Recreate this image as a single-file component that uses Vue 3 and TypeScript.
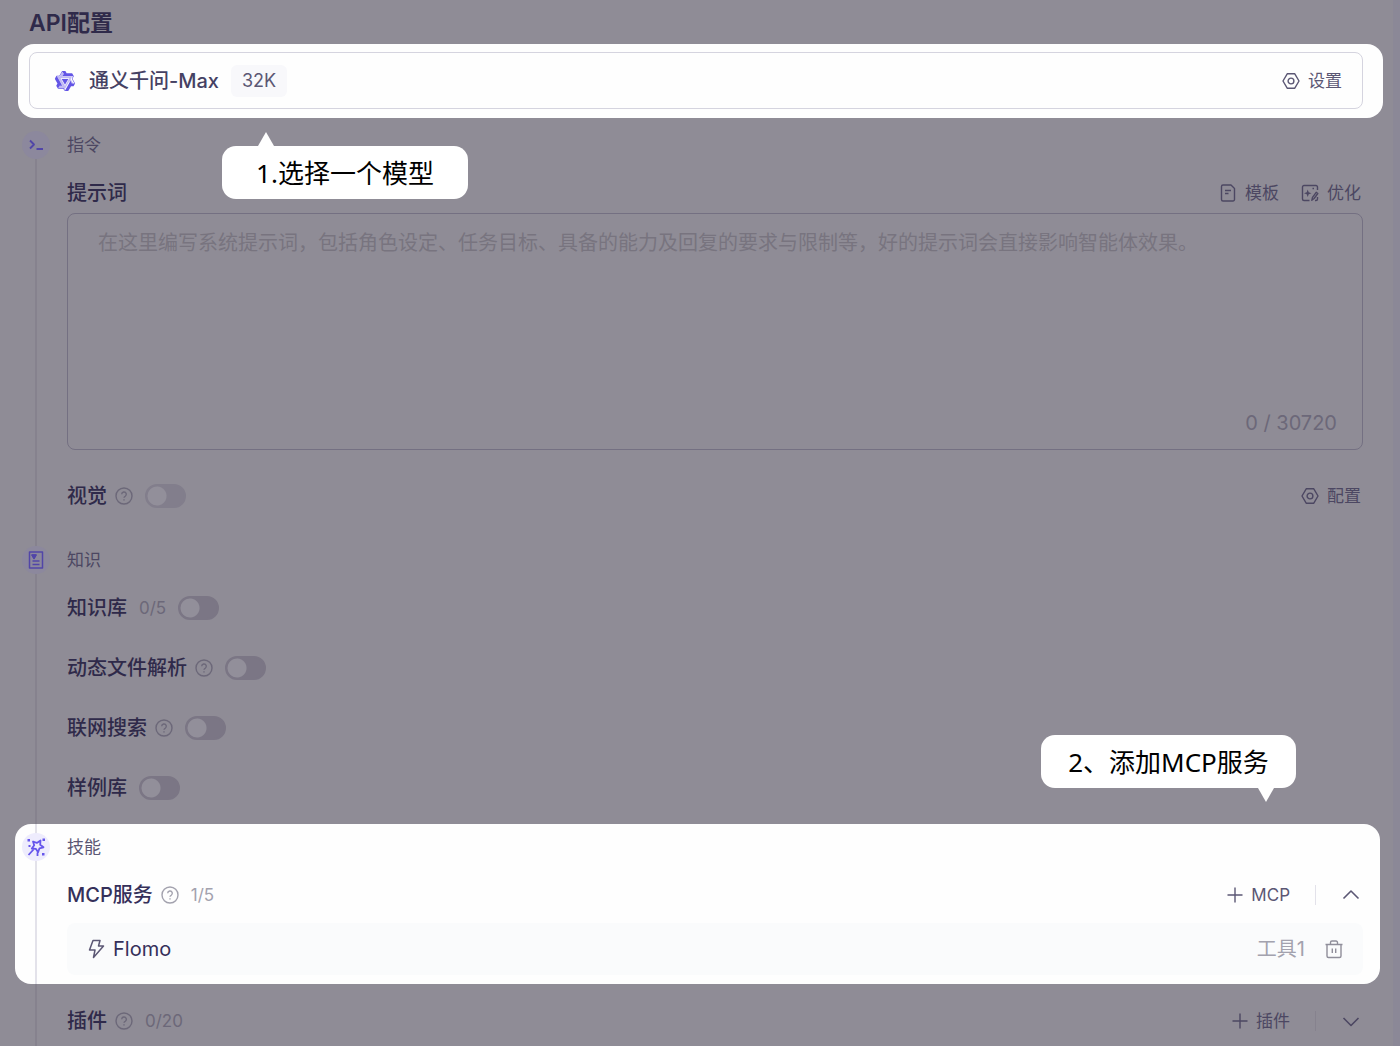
<script setup lang="ts">
import { ref, reactive } from 'vue'

interface KnowledgeItem {
  id: string
  label: string
  count?: string
  help?: boolean
}

const prompt = ref('')
const vision = ref(false)
const knowledge: KnowledgeItem[] = [
  { id: 'base', label: '知识库', count: '0/5' },
  { id: 'files', label: '动态文件解析', help: true },
  { id: 'web', label: '联网搜索', help: true },
  { id: 'samples', label: '样例库' },
]
const enabled = reactive<Record<string, boolean>>({
  base: false,
  files: false,
  web: false,
  samples: false,
})
</script>

<template>
  <svg class="defs" aria-hidden="true">
    <symbol id="i-help" viewBox="0 0 18 18">
      <circle cx="9" cy="9" r="8" />
      <path d="M6.7 7.3a2.3 2.3 0 1 1 3.4 2c-.8.4-1.1.8-1.1 1.5M9 12.3v1.2" />
    </symbol>
    <symbol id="i-gear" viewBox="0 0 18 18">
      <path d="M5.2 1.800h7.600L17 9l-4.200 7.200H5.200L1 9z" />
      <circle cx="9" cy="9" r="2.900" />
    </symbol>
    <symbol id="i-plus" viewBox="0 0 16 16"><path d="M8 .5v15M.5 8h15" /></symbol>
  </svg>

  <main class="panel">
    <h1>API配置</h1>

    <section class="spot model-spot">
      <div class="model">
        <svg class="logo" viewBox="0 0 24 24" aria-hidden="true">
          <path
            fill="#6355e6"
            d="M12.604 1.340c.393.690.784 1.382 1.174 2.075a.18.18 0 00.157.091h5.552c.174 0 .322.110.446.327l1.454 2.570c.190.337.240.478.024.837-.260.430-.513.864-.760 1.300l-.367.658c-.106.196-.223.280-.040.512l2.652 4.637c.172.301.111.494-.043.770-.437.785-.882 1.564-1.335 2.340-.159.272-.352.375-.680.370-.777-.016-1.552-.010-2.327.016a.099.099 0 00-.081.050 575.097 575.097 0 01-2.705 4.740c-.169.293-.380.363-.725.364-.997.003-2.002.004-3.017.002a.537.537 0 01-.465-.271l-1.335-2.323a.09.09 0 00-.083-.049H4.982c-.285.030-.553-.001-.805-.092l-1.603-2.770a.543.543 0 01-.002-.540l1.207-2.120a.198.198 0 000-.197 550.951 550.951 0 01-1.875-3.272l-.790-1.395c-.160-.310-.173-.496.095-.965.465-.813.927-1.625 1.387-2.436.132-.234.304-.334.584-.335a338.300 338.300 0 012.589-.001.124.124 0 00.107-.063l2.806-4.895a.488.488 0 01.422-.246c.524-.001 1.053 0 1.583-.006L11.704 1c.341-.003.724.032.900.340zm-3.432.403a.06.06 0 00-.052.030L6.254 6.788a.157.157 0 01-.135.078H3.253c-.056 0-.070.025-.041.074l5.810 10.156c.025.042.013.062-.034.063l-2.795.015a.218.218 0 00-.200.116l-1.320 2.310c-.044.078-.021.118.068.118l5.716.008c.046 0 .080.020.104.061l1.403 2.454c.046.081.092.082.139 0l5.006-8.760.783-1.382a.055.055 0 01.096 0l1.424 2.530a.122.122 0 00.107.062l2.763-.020a.04.04 0 00.035-.020.041.041 0 000-.040l-2.900-5.086a.108.108 0 010-.113l.293-.507 1.120-1.977c.024-.041.012-.062-.035-.062H9.200c-.059 0-.073-.026-.043-.077l1.434-2.505a.107.107 0 000-.114L9.225 1.774a.06.06 0 00-.053-.031zm6.290 8.020c.046 0 .058.020.034.060l-.832 1.465-2.613 4.585a.056.056 0 01-.050.029.058.058 0 01-.050-.029L8.498 9.841c-.020-.034-.010-.052.028-.054l.216-.012 6.722-.012z"
          />
          <path fill="#6355e6" opacity=".4" d="M9.200 2l1.300 2.300-1.500 3h10.500l-1.400 2.700 3 5-3-.2-1.400-2.600-5.600 10-1.400-2.500H4.300l1.500-2.500h3.500L3.500 7h3z" />
          <path fill="#fefefe" d="M7.200 9h9.600L12 17.500z" />
          <path fill="#6355e6" d="M8.400 9.700h7.200L12 16z" />
        </svg>
        <strong>通义千问-Max</strong>
        <span class="badge">32K</span>
        <button class="act push" type="button">
          <svg class="ico"><use href="#i-gear" /></svg>设置
        </button>
      </div>
      <div class="tip tip-model">1.选择一个模型</div>
    </section>

    <section class="group first">
      <div class="rail">
        <span class="dot">
          <svg viewBox="0 0 18 18"><path d="M3 4.500l4 4-4 4M9.500 13H16" stroke-width="1.800" /></svg>
        </span>
      </div>
      <div class="body">
        <h2>指令</h2>
        <div class="row">
          <label class="name" for="prompt">提示词</label>
          <button class="act push" type="button">
            <svg class="ico" viewBox="0 0 18 18">
              <path d="M4 1h8l3.500 3.500V15.500a1.500 1.500 0 0 1-1.500 1.500H4a1.500 1.500 0 0 1-1.500-1.500v-13A1.500 1.500 0 0 1 4 1zM6 6.500h6M6 9.500h3.500" />
            </svg>模板
          </button>
          <button class="act next" type="button">
            <svg class="ico" viewBox="0 0 18 18">
              <path d="M16.500 6V3A1.500 1.500 0 0 0 15 1.500H3A1.500 1.500 0 0 0 1.500 3v12A1.500 1.500 0 0 0 3 16.500h5.500M10.800 16.300l.7-3 3.700-5 1.600 1.200-3.700 5zM14 16.500h1a1.500 1.500 0 0 0 1.500-1.500v-2" />
              <path d="M6.700 5.500l1 2.800 2.800 1-2.800 1-1 2.700-1-2.700-2.700-1 2.700-1z" fill="currentColor" stroke="none" />
              <path d="M11.500 4.500h1.500" />
            </svg>优化
          </button>
        </div>
        <div class="prompt">
          <textarea
            id="prompt"
            v-model="prompt"
            placeholder="在这里编写系统提示词，包括角色设定、任务目标、具备的能力及回复的要求与限制等，好的提示词会直接影响智能体效果。"
          ></textarea>
          <output for="prompt">{{ prompt.length }} / 30720</output>
        </div>
        <div class="row vision">
          <label class="name" for="vision">视觉</label>
          <svg class="help"><use href="#i-help" /></svg>
          <input id="vision" v-model="vision" class="switch faint" type="checkbox" />
          <button class="act push" type="button">
            <svg class="ico"><use href="#i-gear" /></svg>配置
          </button>
        </div>
      </div>
    </section>

    <section class="group">
      <div class="rail">
        <span class="dot">
          <svg viewBox="0 0 18 18">
            <path d="M2.500 1h13v16h-13z" stroke-width="1.500" />
            <path d="M5 4h4L7 7.500zM5.500 10h7M5.500 13.500h7" />
            <path d="M5 4h4L7 7.500z" fill="currentColor" />
          </svg>
        </span>
      </div>
      <div class="body">
        <h2>知识</h2>
        <div class="list">
          <div v-for="item in knowledge" :key="item.id" class="row">
            <label class="name" :for="item.id">{{ item.label }}</label>
            <svg v-if="item.help" class="help"><use href="#i-help" /></svg>
            <span v-if="item.count" class="count">{{ item.count }}</span>
            <input :id="item.id" v-model="enabled[item.id]" class="switch" type="checkbox" />
          </div>
        </div>
      </div>
    </section>

    <section class="spot skill-spot">
      <div class="tip tip-mcp">2、添加MCP服务</div>
      <div class="group">
        <div class="rail skill-rail">
          <span class="dot">
            <svg class="wand" viewBox="0 0 20 20">
              <path d="M7 4.500l3.800 1.400L14.500 3.500l-.3 4.300 3.300 2.500-4 1-1.400 3.900-2.300-3.400-4-.3 2.400-3.200zM7.500 12.500L2.500 18M11.500 15.500V19" stroke-width="1.800" />
              <path d="M1.500 2H4v2.500H1.500zM16.500 1.500H19V4h-2.500zM16 16h2.500v2.500H16zM2.500 8h2v2h-2z" fill="currentColor" stroke="none" />
            </svg>
          </span>
        </div>
        <div class="body">
          <h2>技能</h2>
          <div class="row">
            <h3 class="name">MCP服务</h3>
            <svg class="help"><use href="#i-help" /></svg>
            <span class="count">1/5</span>
            <button class="act push" type="button">
              <svg class="plus"><use href="#i-plus" /></svg>MCP
            </button>
            <i class="sep"></i>
            <button class="fold" type="button" aria-label="收起">
              <svg viewBox="0 0 18 18"><path d="M1.500 12.500L9 5l7.500 7.500" /></svg>
            </button>
          </div>
          <div class="tool">
            <svg class="bolt" viewBox="0 0 18 20">
              <path d="M6 1.500h7l-1.500 5.500H16.500L6.500 18.500l1.500-7.500H2.500z" />
            </svg>
            <span>Flomo</span>
            <span class="tools push">工具1</span>
            <button class="trash" type="button" aria-label="删除">
              <svg viewBox="0 0 18 20">
                <path d="M.5 5.500h17M2 5.500V17a1.500 1.500 0 0 0 1.500 1.500h11A1.500 1.500 0 0 0 16 17V5.500M5.500 5V3.500A1.500 1.500 0 0 1 7 2h4a1.500 1.500 0 0 1 1.500 1.500V5M7.300 9.500v4.500M10.700 9.500v4.500" />
              </svg>
            </button>
          </div>
        </div>
      </div>
    </section>

    <section class="group">
      <div class="rail"></div>
      <div class="body">
        <div class="row plugin">
          <h3 class="name">插件</h3>
          <svg class="help"><use href="#i-help" /></svg>
          <span class="count">0/20</span>
          <button class="act push" type="button">
            <svg class="plus"><use href="#i-plus" /></svg>插件
          </button>
          <i class="sep"></i>
          <button class="fold" type="button" aria-label="展开">
            <svg viewBox="0 0 18 18"><path d="M1.500 6L9 13.500 16.500 6" /></svg>
          </button>
        </div>
      </div>
    </section>
  </main>
</template>

<style>
body {
  margin: 0;
  background: #8f8c96;
}
</style>

<style scoped>
.panel {
  --ink: #2f2a4a;
  --sub: #4c4762;
  --mute: #6c6879;
  --line: #86828e;
  --dot: #8c889d;
  --accent: #5145a8;
  box-sizing: border-box;
  min-height: 100vh;
  background: linear-gradient(to left, #8b8897 7px, #8f8c96 7px);
  color: var(--ink);
  font-family: Inter, 'Noto Sans CJK SC', sans-serif;
  font-size: 20px;
  line-height: 24px;
}

.defs {
  position: absolute;
  width: 0;
  height: 0;
}

svg {
  flex: none;
  fill: none;
  stroke: currentColor;
  stroke-width: 1.4;
  stroke-linejoin: round;
}

h1,
h2,
h3 {
  margin: 0;
  font-size: 20px;
  font-weight: 500;
}

h1 {
  padding: 9px 29px 7px;
  font-size: 23px;
  font-weight: 600;
  line-height: 28px;
}

button {
  padding: 0;
  border: 0;
  background: none;
  color: inherit;
  font: inherit;
}

.spot {
  --ink: #35305a;
  --sub: #5b5774;
  --mute: #a3a2ae;
  --line: #e3e2ea;
  --dot: #eeecfd;
  --accent: #6656ec;
  position: relative;
  border-radius: 16px;
  background: #fefefe;
  color: var(--ink);
}

.model-spot {
  margin: 0 17px 0 18px;
  padding: 8px 20px 9px 11px;
}

.model {
  display: flex;
  align-items: center;
  height: 55px;
  padding: 0 20px 0 24px;
  border: 1px solid #d5d4df;
  border-radius: 8px;
}

.model strong {
  margin: 0 12px 0 13px;
  color: #454163;
  font-weight: 500;
}

.logo {
  width: 22px;
  height: 22px;
  stroke: none;
}

.badge {
  padding: 4px 11px;
  border-radius: 6px;
  background: #f8f8fb;
  color: var(--sub);
  font-size: 18px;
}

.push {
  margin-left: auto;
}

.act {
  display: flex;
  align-items: center;
  gap: 8px;
  color: var(--sub);
  font-size: 17px;
}

.row .act {
  margin-right: 2px;
}

.row .next {
  margin-left: 20px;
}

.ico {
  width: 18px;
  height: 18px;
}

.plus {
  width: 16px;
  height: 16px;
}

.tip {
  position: absolute;
  box-sizing: border-box;
  height: 53px;
  border-radius: 14px;
  background: #fff;
  color: #000;
  font-family: 'Noto Sans', 'Noto Sans CJK SC', sans-serif;
  font-size: 26px;
  line-height: 55px;
  text-align: center;
  white-space: nowrap;
}

.tip::after {
  content: '';
  position: absolute;
  width: 16px;
  height: 14px;
  background: #fff;
}

.tip-model {
  top: 102px;
  left: 204px;
  width: 246px;
}

.tip-model::after {
  bottom: 100%;
  left: 36px;
  clip-path: polygon(50% 0, 100% 100%, 0 100%);
}

.tip-mcp {
  right: 84px;
  bottom: calc(100% + 36px);
  width: 255px;
}

.tip-mcp::after {
  top: 100%;
  right: 22px;
  clip-path: polygon(0 0, 100% 0, 50% 100%);
}

.group {
  display: flex;
  gap: 17px;
  padding: 0 37px 0 22px;
}

.first {
  padding-top: 13px;
}

.rail {
  flex: none;
  width: 28px;
  background: linear-gradient(var(--line), var(--line)) center / 2px 100% no-repeat;
}

.first .rail {
  background-position: center 28px;
}

.dot {
  display: flex;
  align-items: center;
  justify-content: center;
  width: 28px;
  height: 28px;
  border-radius: 14px;
  background: var(--dot);
  color: var(--accent);
}

.dot svg {
  width: 18px;
  height: 18px;
}

.dot .wand {
  width: 20px;
  height: 20px;
}

.body {
  flex: 1;
  min-width: 0;
}

h2 {
  margin-bottom: 14px;
  color: var(--sub);
  font-size: 17px;
  font-weight: 400;
  line-height: 28px;
}

.row {
  display: flex;
  align-items: center;
  height: 40px;
}

.name {
  font-weight: 500;
}

.help {
  width: 18px;
  height: 18px;
  margin-left: 8px;
  color: var(--mute);
}

.count {
  margin-left: 12px;
  color: var(--mute);
  font-size: 17px;
}

.switch {
  appearance: none;
  width: 41px;
  height: 24px;
  margin: 0 0 0 12px;
  border: 2px solid #7b7685;
  border-radius: 12px;
  background: radial-gradient(circle at 10px 10px, #928f9a 9px, #7b7685 10px);
}

.faint {
  border-color: #827e8c;
  background: radial-gradient(circle at 10px 10px, #928f9a 9px, #827e8c 10px);
}

.prompt {
  display: flex;
  flex-direction: column;
  padding: 17px 25px 14px 30px;
  border: 1px solid #747082;
  border-radius: 8px;
}

textarea {
  display: block;
  height: 180px;
  padding: 0;
  border: 0;
  outline: 0;
  resize: none;
  background: none;
  color: var(--ink);
  font: inherit;
}

textarea::placeholder {
  color: #78747f;
  opacity: 1;
}

output {
  align-self: flex-end;
  color: var(--mute);
}

.vision {
  margin: 26px 0 30px;
}

.list {
  display: grid;
  gap: 20px;
  padding-bottom: 16px;
}

.skill-spot {
  margin: 0 20px 0 15px;
}

.skill-spot .group {
  padding: 0 17px 0 7px;
}

.skill-spot .body {
  padding: 9px 0;
}

.skill-rail {
  padding-top: 9px;
}

.sep {
  width: 1px;
  height: 20px;
  margin: 0 26px 0 23px;
  background: var(--line);
}

.fold {
  display: flex;
  margin-right: 3px;
  color: var(--sub);
}

.fold svg {
  width: 18px;
  height: 18px;
  stroke-width: 1.6;
}

.tool {
  display: flex;
  align-items: center;
  height: 52px;
  margin-top: 8px;
  padding: 0 20px;
  border-radius: 8px;
  background: #fafbfc;
}

.bolt {
  width: 18px;
  height: 20px;
  margin-right: 8px;
  color: var(--sub);
  stroke-width: 1.5;
}

.tools {
  color: var(--mute);
}

.trash {
  display: flex;
  margin-left: 20px;
  color: #8f8e9a;
}

.trash svg {
  width: 18px;
  height: 20px;
}

.plugin {
  margin: 17px 0 5px;
}
</style>
